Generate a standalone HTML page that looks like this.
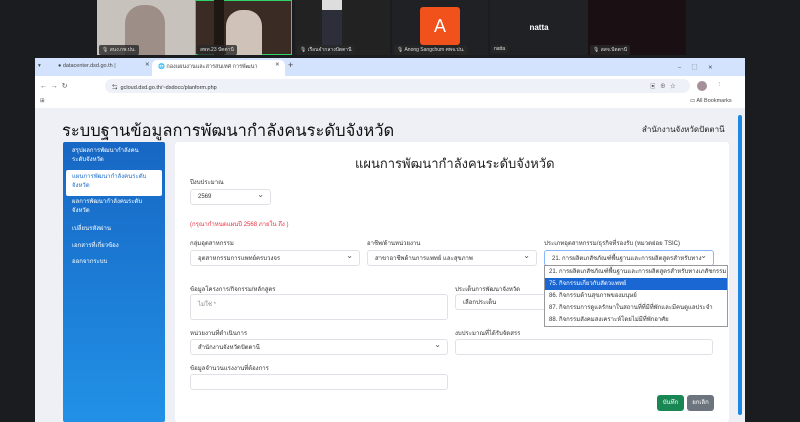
<!DOCTYPE html>
<html><head><meta charset="utf-8"><style>
*{margin:0;padding:0;box-sizing:border-box}
body{width:800px;height:422px;overflow:hidden;background:#1b1c1f;font-family:"Liberation Sans","Noto Sans CJK SC",sans-serif;position:relative;color:#222}
.a{position:absolute}
.t{font-size:5.5px;white-space:nowrap}
.lbl{position:absolute;font-size:6px;color:#333;white-space:nowrap}
.box{position:absolute;background:#fff;border:1px solid #dee2e6;border-radius:3px;font-size:6px;color:#333;padding:0 7px;display:flex;align-items:center;white-space:nowrap;overflow:hidden}
.sel::after{content:"⌄";position:absolute;right:6px;top:0px;font-size:8px;color:#555}
.nm{position:absolute;background:rgba(40,40,40,.8);color:#ddd;font-size:5px;padding:1px 3px;border-radius:2px;white-space:nowrap}
</style></head><body>
<div class="a" style="left:97px;top:0;width:98px;height:55px;background:#c8c2bd"></div>
<div class="a" style="left:125px;top:5px;width:40px;height:50px;background:#9d8f87;border-radius:18px 18px 0 0"></div>
<div class="a" style="left:195px;top:0;width:97px;height:55px;background:#3a2c24;border:1px solid #2fd36a"></div>
<div class="a" style="left:226px;top:10px;width:36px;height:45px;background:#cfc3b9;border-radius:16px 16px 0 0"></div>
<div class="a" style="left:214px;top:0;width:10px;height:55px;background:#1e1712"></div>
<div class="a" style="left:295px;top:0;width:27px;height:55px;background:#222"></div>
<div class="a" style="left:322px;top:0;width:20px;height:55px;background:#ddd"></div>
<div class="a" style="left:322px;top:10px;width:20px;height:45px;background:#2c2f3a"></div>
<div class="a" style="left:342px;top:0;width:48px;height:55px;background:#222"></div>
<div class="a" style="left:392px;top:0;width:96px;height:55px;background:#202124"></div>
<div class="a" style="left:420px;top:7px;width:40px;height:38px;background:#f1511b;border-radius:3px;color:#fff;font-size:18px;text-align:center;line-height:38px">A</div>
<div class="a" style="left:490px;top:0;width:98px;height:55px;background:#202124;color:#fff;font-size:8px;font-weight:bold;text-align:center;line-height:56px">natta</div>
<div class="a" style="left:588px;top:0;width:98px;height:55px;background:#1a1014"></div>
<div class="nm" style="left:99px;top:45px">🎙 สนง.กพ.ปน.</div>
<div class="nm" style="left:197px;top:45px">สพท.23 ปัตตานี</div>
<div class="nm" style="left:297px;top:45px">🎙 เรือนจำกลางปัตตานี</div>
<div class="nm" style="left:394px;top:45px">🎙 Anong Sangchum ศพจ.ปน.</div>
<div class="nm" style="left:491px;top:45px">natta</div>
<div class="nm" style="left:590px;top:45px">🎙 สสจ.ปัตตานี</div>
<div class="a" style="left:35px;top:58px;width:710px;height:364px;background:#eef0f6"></div>
<div class="a" style="left:35px;top:58px;width:710px;height:18px;background:#d3e3fd"></div>
<div class="a t" style="left:38px;top:63px;color:#444">▾</div>
<div class="a t" style="left:58px;top:63px;color:#444">● datacenter.dsd.go.th |</div>
<div class="a t" style="left:145px;top:62px;color:#444">✕</div>
<div class="a" style="left:152px;top:60px;width:133px;height:16px;background:#fff;border-radius:5px 5px 0 0"></div>
<div class="a t" style="left:158px;top:63px;color:#444">🌐 กองแผนงานและสารสนเทศ การพัฒนา</div>
<div class="a t" style="left:275px;top:62px;color:#444">✕</div>
<div class="a" style="left:288px;top:60px;font-size:9px;color:#444">+</div>
<div class="a t" style="left:678px;top:63px;color:#444">–&nbsp;&nbsp;&nbsp;&nbsp;&nbsp;&nbsp;&nbsp;▢&nbsp;&nbsp;&nbsp;&nbsp;&nbsp;&nbsp;&nbsp;✕</div>
<div class="a" style="left:35px;top:76px;width:710px;height:32px;background:#fff"></div>
<div class="a t" style="left:40px;top:82px;color:#555;font-size:7px">←&nbsp;&nbsp;→&nbsp;&nbsp;↻</div>
<div class="a" style="left:105px;top:79px;width:585px;height:14px;background:#eef1f8;border-radius:7px"></div>
<div class="a t" style="left:112px;top:83px;color:#333">⇆&nbsp;&nbsp;gcloud.dsd.go.th/~dsdocc/planform.php</div>
<div class="a t" style="left:650px;top:82px;color:#555">▣&nbsp;&nbsp;&nbsp;⊕&nbsp;&nbsp;&nbsp;☆</div>
<div class="a" style="left:697px;top:81px;width:10px;height:10px;border-radius:5px;background:#a58f9a"></div>
<div class="a t" style="left:717px;top:82px;color:#555">⋮</div>
<div class="a t" style="left:40px;top:98px;color:#555">⊞</div>
<div class="a t" style="left:690px;top:98px;color:#444">▭ All Bookmarks</div>
<div class="a" style="left:738px;top:115px;width:4px;height:300px;background:#1e88e5;border-radius:2px"></div>
<div class="a" style="left:62px;top:118px;font-size:16.5px;color:#111;white-space:nowrap">ระบบฐานข้อมูลการพัฒนากำลังคนระดับจังหวัด</div>
<div class="a" style="left:642px;top:123px;font-size:8px;color:#222;white-space:nowrap">สำนักงานจังหวัดปัตตานี</div>
<div class="a" style="left:63px;top:142px;width:102px;height:280px;background:linear-gradient(#1767c4,#2191e6);border-radius:2px"></div>
<div class="a" style="left:66px;top:170px;width:96px;height:26px;background:#fff;border-radius:2px"></div>
<div class="a" style="left:72px;top:147px;font-size:6px;color:#fff;line-height:9px">สรุปผลการพัฒนากำลังคน<br>ระดับจังหวัด</div>
<div class="a" style="left:72px;top:173px;font-size:6px;color:#1f6fc8;line-height:9px">แผนการพัฒนากำลังคนระดับ<br>จังหวัด</div>
<div class="a" style="left:72px;top:198px;font-size:6px;color:#fff;line-height:9px">ผลการพัฒนากำลังคนระดับ<br>จังหวัด</div>
<div class="a" style="left:72px;top:223px;font-size:6px;color:#fff">เปลี่ยนรหัสผ่าน</div>
<div class="a" style="left:72px;top:240px;font-size:6px;color:#fff">เอกสารที่เกี่ยวข้อง</div>
<div class="a" style="left:72px;top:256px;font-size:6px;color:#fff">ออกจากระบบ</div>
<div class="a" style="left:175px;top:142px;width:554px;height:280px;background:#fff;border-radius:3px"></div>
<div class="a" style="left:355px;top:153px;font-size:13px;color:#222;white-space:nowrap">แผนการพัฒนากำลังคนระดับจังหวัด</div>
<div class="lbl" style="left:190px;top:177px">ปีงบประมาณ</div>
<div class="box sel" style="left:190px;top:189px;width:81px;height:16px">2569</div>
<div class="lbl" style="left:190px;top:219px;color:#e8333f">(กรุณากำหนดแผนปี 2568 ภายใน ถึง )</div>
<div class="lbl" style="left:190px;top:238px">กลุ่มอุตสาหกรรม</div>
<div class="box sel" style="left:190px;top:250px;width:170px;height:16px">อุตสาหกรรมการแพทย์ครบวงจร</div>
<div class="lbl" style="left:367px;top:238px">อาชีพ/ด้านหน่วยงาน</div>
<div class="box sel" style="left:367px;top:250px;width:170px;height:16px">สาขาอาชีพด้านการแพทย์ และสุขภาพ</div>
<div class="lbl" style="left:544px;top:238px">ประเภทอุตสาหกรรม/ธุรกิจที่รองรับ (หมวดย่อย TSIC)</div>
<div class="box sel" style="left:544px;top:250px;width:170px;height:16px;border:1.5px solid #86b7fe">21. การผลิตเภสัชภัณฑ์พื้นฐานและการผลิตสูตรสำหรับทาง</div>
<div class="lbl" style="left:190px;top:284px">ข้อมูลโครงการ/กิจกรรม/หลักสูตร</div>
<div class="box" style="left:190px;top:294px;width:258px;height:26px;align-items:flex-start;padding-top:4px;color:#888">ไม่ใช่ *</div>
<div class="lbl" style="left:455px;top:284px">ประเด็นการพัฒนาจังหวัด</div>
<div class="box" style="left:455px;top:294px;width:100px;height:16px">เลือกประเด็น</div>
<div class="lbl" style="left:190px;top:328px">หน่วยงานที่ดำเนินการ</div>
<div class="box sel" style="left:190px;top:339px;width:258px;height:16px">สำนักงานจังหวัดปัตตานี</div>
<div class="lbl" style="left:455px;top:328px">งบประมาณที่ได้รับจัดสรร</div>
<div class="box" style="left:455px;top:339px;width:258px;height:16px"></div>
<div class="lbl" style="left:190px;top:363px">ข้อมูลจำนวนแรงงานที่ต้องการ</div>
<div class="box" style="left:190px;top:374px;width:258px;height:16px"></div>
<div class="a" style="left:657px;top:395px;width:27px;height:16px;background:#198754;border-radius:3px;color:#fff;font-size:6px;text-align:center;line-height:16px">บันทึก</div>
<div class="a" style="left:687px;top:395px;width:27px;height:16px;background:#6c757d;border-radius:3px;color:#fff;font-size:6px;text-align:center;line-height:16px">ยกเลิก</div>
<div class="a" style="left:544px;top:265px;width:184px;height:62px;background:#fff;border:1px solid #999;font-size:6px;color:#333;line-height:12px">
<div style="padding-left:4px;white-space:nowrap;overflow:hidden">21. การผลิตเภสัชภัณฑ์พื้นฐานและการผลิตสูตรสำหรับทางเภสัชกรรม</div>
<div style="padding-left:4px;background:#1a66d2;color:#fff">75. กิจกรรมเกี่ยวกับสัตวแพทย์</div>
<div style="padding-left:4px">86. กิจกรรมด้านสุขภาพของมนุษย์</div>
<div style="padding-left:4px;white-space:nowrap">87. กิจกรรมการดูแลรักษาในสถานที่ที่มีที่พักและมีคนดูแลประจำ</div>
<div style="padding-left:4px">88. กิจกรรมสังคมสงเคราะห์โดยไม่มีที่พักอาศัย</div>
</div>
</body></html>
